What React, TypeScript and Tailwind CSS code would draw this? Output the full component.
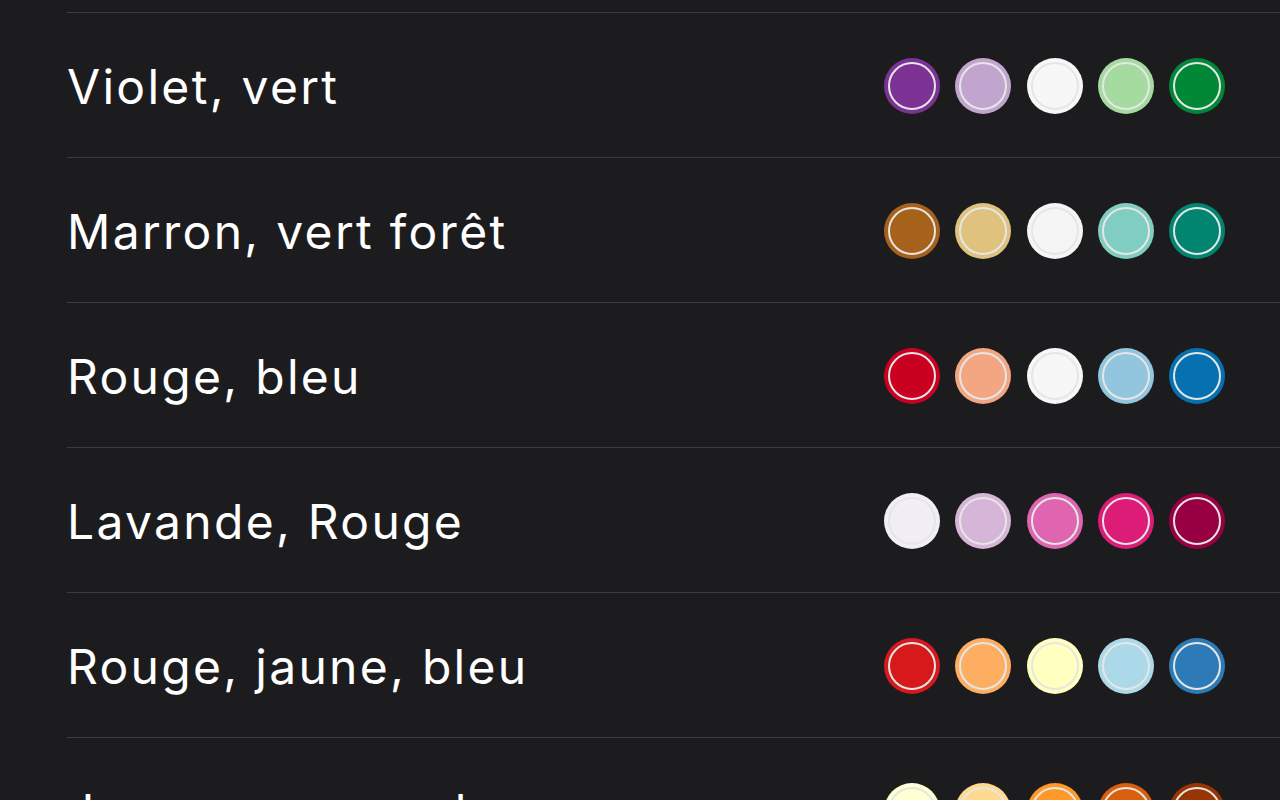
const SCHEMES: { name: string; colors: string[] }[] = [
  { name: "Violet, vert", colors: ["#7b3294", "#c2a5cf", "#f7f7f7", "#a6dba0", "#008837"] },
  { name: "Marron, vert forêt", colors: ["#a6611a", "#dfc27d", "#f5f5f5", "#80cdc1", "#018571"] },
  { name: "Rouge, bleu", colors: ["#ca0020", "#f4a582", "#f7f7f7", "#92c5de", "#0571b0"] },
  { name: "Lavande, Rouge", colors: ["#f1eef6", "#d7b5d8", "#df65b0", "#dd1c77", "#980043"] },
  { name: "Rouge, jaune, bleu", colors: ["#d7191c", "#fdae61", "#ffffbf", "#abd9e9", "#2c7bb6"] },
  { name: "Jaune, orange, brun", colors: ["#ffffd4", "#fed98e", "#fe9929", "#d95f0e", "#993404"] },
];

function Swatch({ color }: { color: string }) {
  return (
    <div
      className="flex h-14 w-14 items-center justify-center rounded-full"
      style={{ backgroundColor: color }}
    >
      <div className="h-12 w-12 rounded-full border-2 border-[#e6e6e6]" />
    </div>
  );
}

export default function App() {
  return (
    <div
      className="h-[800px] w-[1280px] overflow-hidden bg-[#1c1c1e] text-white"
      style={{ fontFamily: "Inter, 'Noto Sans', sans-serif" }}
    >
      <div className="h-3" />
      <div className="pl-[67px]">
        {SCHEMES.map((s) => (
          <div
            key={s.name}
            className="flex h-[145px] items-center justify-between border-t border-[#3c3c3f] pr-[55px]"
          >
            <span className="pt-[3px] text-[48px] leading-none tracking-[2.3px]">{s.name}</span>
            <div className="flex gap-[15.25px] pt-[2px]">
              {s.colors.map((c, i) => (
                <Swatch key={i} color={c} />
              ))}
            </div>
          </div>
        ))}
      </div>
    </div>
  );
}
